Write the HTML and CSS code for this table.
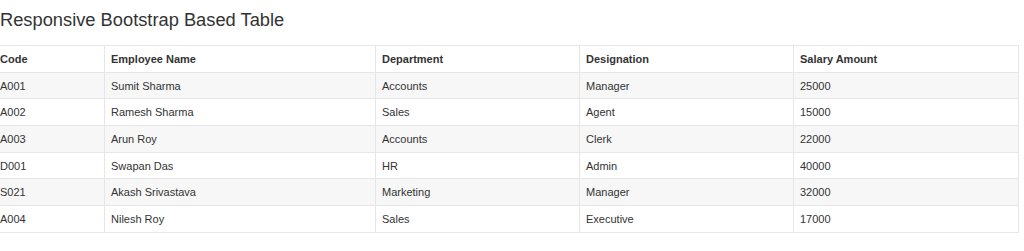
FILE: index.html
```html
<!DOCTYPE html>
<html>
<head>
<meta charset="utf-8">
<link rel="stylesheet" href="styles.css">
</head>
<body>
<div class="page">
  <h2 class="title">Responsive Bootstrap Based Table</h2>
  <table class="grid">
    <colgroup>
      <col class="c1"><col class="c2"><col class="c3"><col class="c4"><col class="c5">
    </colgroup>
    <thead>
      <tr><th>Code</th><th>Employee Name</th><th>Department</th><th>Designation</th><th>Salary Amount</th></tr>
    </thead>
    <tbody>
      <tr><td>A001</td><td>Sumit Sharma</td><td>Accounts</td><td>Manager</td><td>25000</td></tr>
      <tr><td>A002</td><td>Ramesh Sharma</td><td>Sales</td><td>Agent</td><td>15000</td></tr>
      <tr><td>A003</td><td>Arun Roy</td><td>Accounts</td><td>Clerk</td><td>22000</td></tr>
      <tr><td>D001</td><td>Swapan Das</td><td>HR</td><td>Admin</td><td>40000</td></tr>
      <tr><td>S021</td><td>Akash Srivastava</td><td>Marketing</td><td>Manager</td><td>32000</td></tr>
      <tr><td>A004</td><td>Nilesh Roy</td><td>Sales</td><td>Executive</td><td>17000</td></tr>
    </tbody>
  </table>
</div>
</body>
</html>
```
FILE: styles.css
```css
html, body {
  margin: 0;
  padding: 0;
  background: #fff;
  overflow: hidden;
}
body {
  font-family: "Liberation Sans", Arial, sans-serif;
  color: #333;
}
.page {
  padding-top: 9px;
}
.title {
  margin: 0;
  font-size: 18.3px;
  font-weight: normal;
  line-height: 22px;
  height: 36px;
  color: #333;
}
.grid {
  margin-left: -7px;
  width: 1025px;
  table-layout: fixed;
  border-collapse: collapse;
  font-size: 11px;
}
.c1 { width: 111px; }
.c2 { width: 271px; }
.c3 { width: 204px; }
.c4 { width: 214px; }
.c5 { width: 225px; }
.grid th, .grid td {
  border: 1px solid #e6e6e6;
  padding: 0 6px;
  height: 25.7px;
  text-align: left;
  vertical-align: middle;
}
.grid th {
  font-weight: bold;
  color: #333;
}
.grid tbody tr:nth-child(odd) {
  background: #f7f7f7;
}
```
